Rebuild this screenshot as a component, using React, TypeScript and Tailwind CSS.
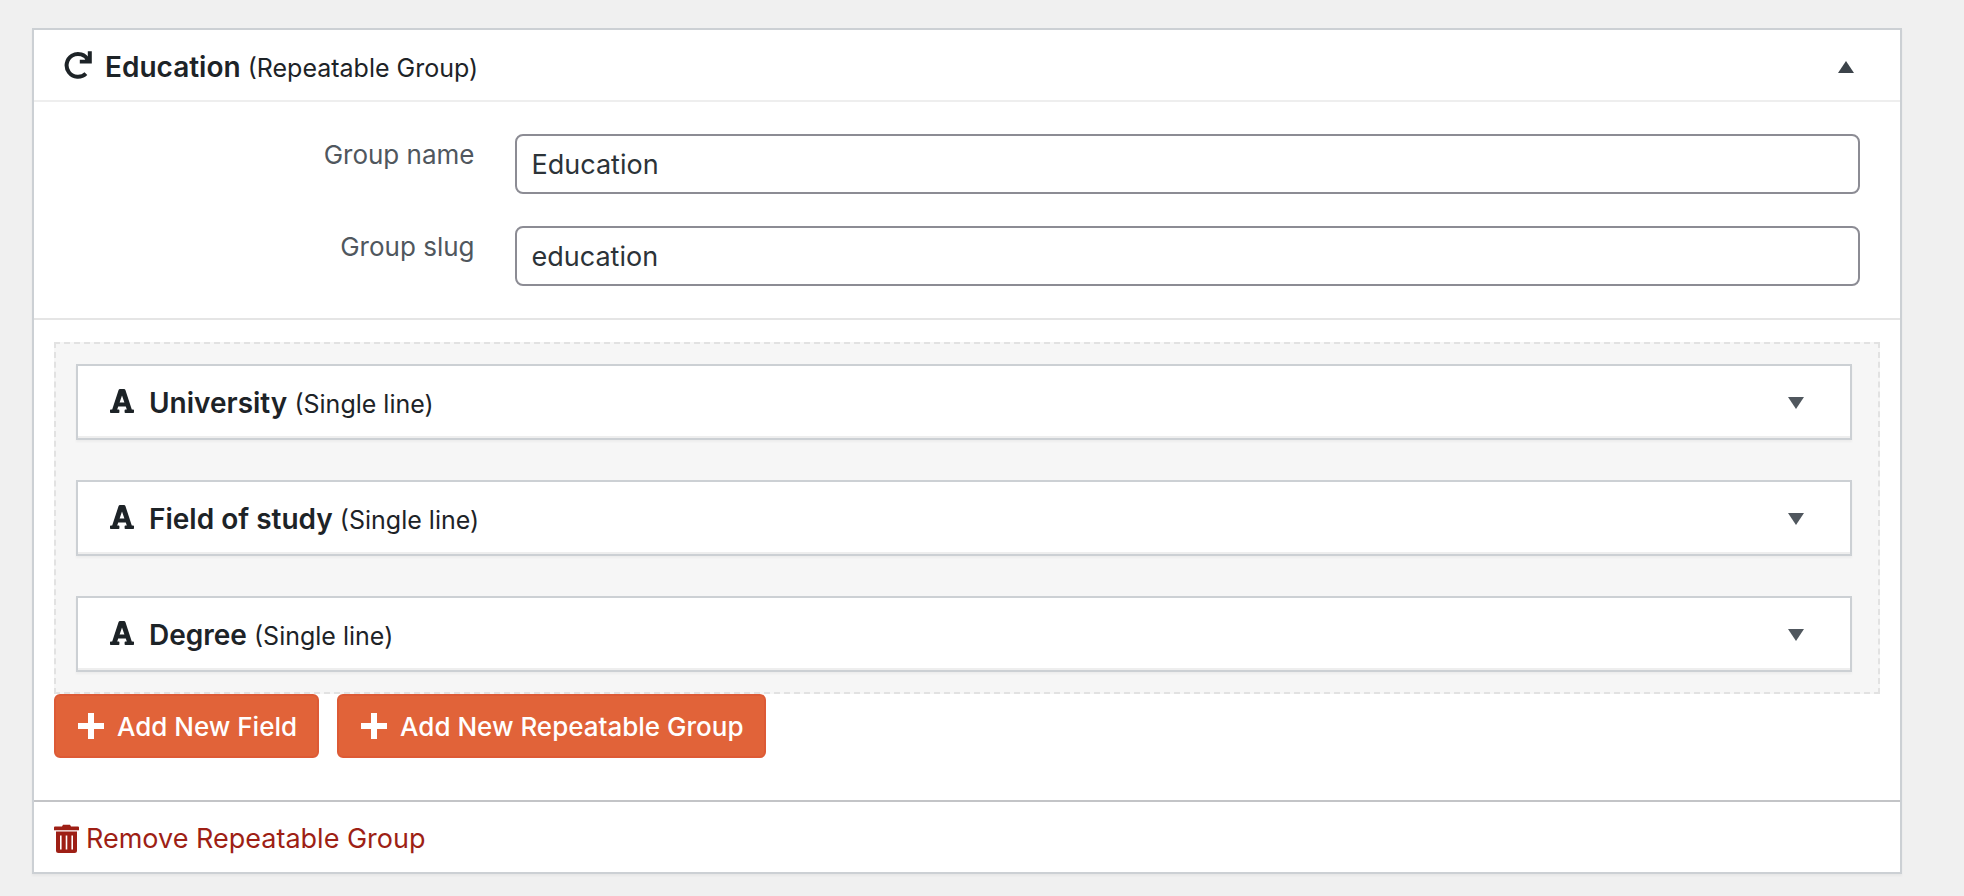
import React, { useState } from "react";

function RepeatIcon() {
  return (
    <svg className="h-7 w-7 shrink-0" viewBox="0 0 28 28" fill="none" aria-hidden="true">
      <path
        d="M24.3 9.5A11.4 11.4 0 1 0 21.9 22.6"
        stroke="currentColor"
        strokeWidth="4"
      />
      <path d="M27.8 0.3V12.5H15.8V8.8H20.8L23.8 6.2V0.3Z" fill="currentColor" />
    </svg>
  );
}

function TextIcon() {
  return (
    <svg className="h-6 w-6 shrink-0" viewBox="0 0 24 24" fill="currentColor" aria-hidden="true">
      <path
        fillRule="evenodd"
        d="M10 0H14Q15 0 15.4 1L21.8 20.4H23.2Q24 20.4 24 21.2V23.3Q24 24 23.2 24H15.4Q14.6 24 14.6 23.3V21.2Q14.6 20.4 15.4 20.4H16.8L15.8 17.4H8.2L7.2 20.4H8.6Q9.4 20.4 9.4 21.2V23.3Q9.4 24 8.6 24H0.8Q0 24 0 23.3V21.2Q0 20.4 0.8 20.4H2.2L8.6 1Q9 0 10 0ZM12 6.6L9.6 13.6H14.4Z"
      />
    </svg>
  );
}

function PlusIcon() {
  return (
    <svg className="h-[26px] w-[26px] shrink-0" viewBox="0 0 26 26" fill="currentColor" aria-hidden="true">
      <path d="M10 0H16V10H26V16H16V26H10V16H0V10H10Z" />
    </svg>
  );
}

function TrashIcon() {
  return (
    <svg className="h-[30px] w-[25px] shrink-0" viewBox="0 0 25 30" fill="currentColor" aria-hidden="true">
      <path d="M8 2.6L9 0.8H16L17 2.6H24Q25 2.6 25 3.6V6.2H0V3.6Q0 2.6 1 2.6Z" />
      <path
        fillRule="evenodd"
        d="M2 7.6H23V26.5Q23 29 20.5 29H4.5Q2 29 2 26.5ZM6 11.5V25.5H7.6V11.5ZM11.7 11.5V25.5H13.3V11.5ZM17.4 11.5V25.5H19V11.5Z"
      />
    </svg>
  );
}

function Triangle({ up = false }: { up?: boolean }) {
  return (
    <svg className="h-3 w-4" viewBox="0 0 16 12" fill="currentColor" aria-hidden="true">
      <path d={up ? "M8 0L16 12H0Z" : "M0 0H16L8 12Z"} />
    </svg>
  );
}

function Heading({ title, kind }: { title: string; kind: string }) {
  return (
    <h3 className="flex-1 pt-1 text-[28px] leading-9 font-semibold">
      {title} <span className="text-[25px] font-normal">({kind})</span>
    </h3>
  );
}

function TextRow({ id, label, initial }: { id: string; label: string; initial: string }) {
  const [value, setValue] = useState(initial);
  return (
    <div className="flex items-start">
      <label htmlFor={id} className="w-1/4 shrink-0 pt-[3px] pr-10 text-right text-[26px] leading-9 text-[#50575e]">
        {label}
      </label>
      <input
        id={id}
        type="text"
        value={value}
        onChange={(e) => setValue(e.target.value)}
        className="h-[60px] min-w-0 flex-1 rounded-lg border-2 border-[#8c8c94] bg-white px-[15px] text-[27px] text-[#2c3338]"
      />
    </div>
  );
}

function FieldCard({ title }: { title: string }) {
  return (
    <li className="border-2 border-[#ccd0d4] bg-white shadow-[0_2px_2px_rgba(0,0,0,0.04)]">
      <div className="flex h-[72px] items-center gap-[15px] border-b-2 border-[#eeeeee] pr-[46px] pl-8">
        <TextIcon />
        <Heading title={title} kind="Single line" />
        <button type="button" aria-label={`Expand ${title}`} className="pt-1 text-[#50575e]">
          <Triangle />
        </button>
      </div>
    </li>
  );
}

function AddButton({ children }: { children: React.ReactNode }) {
  return (
    <button
      type="button"
      className="flex h-16 items-center gap-[13px] rounded-md border-2 border-[#dd5a35] bg-[#e16339] pr-5 pl-[22px] text-[26px] font-medium text-white"
    >
      <PlusIcon />
      {children}
    </button>
  );
}

export default function App() {
  return (
    <main className="min-h-screen bg-[#f0f0f0] pt-7 pr-[62px] pb-5 pl-8 font-['Inter',sans-serif] text-[#1d2327]">
      <section className="border-2 border-[#ccd0d4] bg-white shadow-[0_2px_2px_rgba(0,0,0,0.04)]">
        <header className="flex h-[72px] items-center gap-[13px] border-b-2 border-[#eeeeee] pr-[46px] pl-[30px]">
          <RepeatIcon />
          <Heading title="Education" kind="Repeatable Group" />
          <button type="button" aria-label="Collapse Education" className="pt-1 text-[#3c434a]">
            <Triangle up />
          </button>
        </header>

        <div className="flex flex-col gap-8 border-b-2 border-[#e5e5e5] py-8 pr-10 pl-8">
          <TextRow id="group-name" label="Group name" initial="Education" />
          <TextRow id="group-slug" label="Group slug" initial="education" />
        </div>

        <div className="px-5 pt-[22px] pb-[42px]">
          <ul className="flex flex-col gap-10 border-2 border-dashed border-[#e2e2e2] bg-[#f6f6f6] py-5 pr-[26px] pl-5">
            <FieldCard title="University" />
            <FieldCard title="Field of study" />
            <FieldCard title="Degree" />
          </ul>
          <div className="flex flex-wrap gap-[18px]">
            <AddButton>Add New Field</AddButton>
            <AddButton>Add New Repeatable Group</AddButton>
          </div>
        </div>

        <footer className="flex h-[72px] items-center border-t-2 border-[#c3c4c7] px-5">
          <a href="#remove" className="flex items-center gap-[7px] pt-[3px] text-[27px] leading-9 text-[#9e1f15]">
            <TrashIcon />
            Remove Repeatable Group
          </a>
        </footer>
      </section>
    </main>
  );
}
